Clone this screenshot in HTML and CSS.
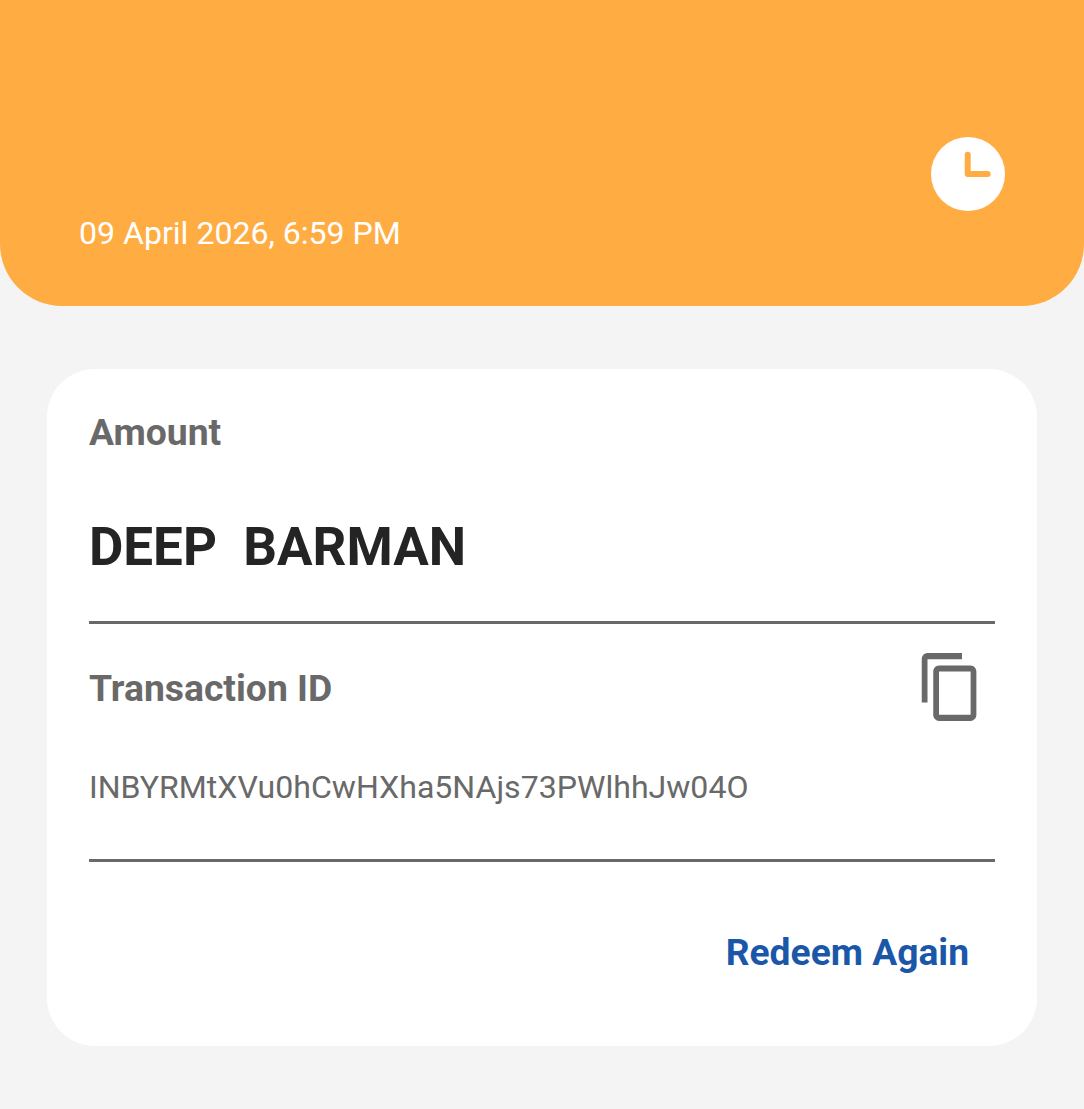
FILE: index.html
```html
<!DOCTYPE html>
<html lang="en">
<head>
  <meta charset="UTF-8" />
  <meta name="viewport" content="width=device-width, initial-scale=1.0"/>
  <title>Transaction Details</title>
  <link rel="stylesheet" href="styles.css">
</head>
<body>
  <div class="header">
    <div class="date">09 April 2026, 6:59 PM</div>
    <div class="clock">
      <svg viewBox="0 0 74 74" width="74" height="74">
        <circle cx="37" cy="37" r="37" fill="#fff"/>
        <path d="M36.7 17.7V37H56.7" fill="none" stroke="#ffad43" stroke-width="6" stroke-linecap="round" stroke-linejoin="round"/>
      </svg>
    </div>
  </div>

  <div class="card">
    <div class="label amount-label">Amount</div>
    <div class="name">DEEP&nbsp; BARMAN</div>
    <hr class="line">

    <div class="id-row">
      <div class="label">Transaction ID</div>
      <svg class="copy" viewBox="0 0 24 24" width="69" height="74" preserveAspectRatio="none">
        <path d="M16 1H4c-1.1 0-2 .9-2 2v14h2V3h12V1zm3 4H8c-1.1 0-2 .9-2 2v14c0 1.1.9 2 2 2h11c1.1 0 2-.9 2-2V7c0-1.1-.9-2-2-2zm0 16H8V7h11v14z" fill="#696969"/>
      </svg>
    </div>
    <div class="txn-id">INBYRMtXVu0hCwHXha5NAjs73PWlhhJw04O</div>
    <hr class="line">

    <div class="actions">
      <span class="redeem">Redeem Again</span>
    </div>
  </div>
</body>
</html>
```

FILE: styles.css
```css
body {
  margin: 0;
  padding: 0;
  font-family: Roboto, "Liberation Sans", sans-serif;
  background-color: #f4f4f4;
}

.header {
  height: 306px;
  box-sizing: border-box;
  padding: 0 79px 55px 79px;
  background-color: #ffad43;
  border-radius: 0 0 62px 62px;
  display: flex;
  justify-content: space-between;
  align-items: flex-end;
}

.date {
  color: #fff;
  font-size: 32.1px;
  line-height: 36px;
}

.clock {
  height: 74px;
  margin-bottom: 40px;
}

.clock svg {
  display: block;
}

.card {
  margin: 63px 47px 0 47px;
  height: 677px;
  box-sizing: border-box;
  padding: 42px 42px 0 42px;
  background-color: #fff;
  border-radius: 48px;
}

.label {
  color: #696969;
  font-size: 37.3px;
  font-weight: 700;
  line-height: 42px;
}

.name {
  color: #242424;
  font-size: 52.9px;
  font-weight: 700;
  line-height: 60px;
  margin-top: 64px;
}

.line {
  border: none;
  height: 3px;
  margin: 0;
  background-color: #696969;
}

.name + .line {
  margin-top: 44px;
}

.id-row {
  display: flex;
  justify-content: space-between;
  align-items: center;
  padding-right: 10px;
  margin-top: 26px;
}

.id-row .label {
  margin-top: 2px;
}

.txn-id {
  color: #696969;
  font-size: 32.1px;
  line-height: 36px;
  margin-top: 45px;
  margin-bottom: 54px;
}

.actions {
  display: flex;
  justify-content: flex-end;
  padding-right: 26px;
  margin-top: 69px;
}

.redeem {
  color: #1b57a8;
  font-size: 37.2px;
  font-weight: 700;
  line-height: 42px;
}
```
